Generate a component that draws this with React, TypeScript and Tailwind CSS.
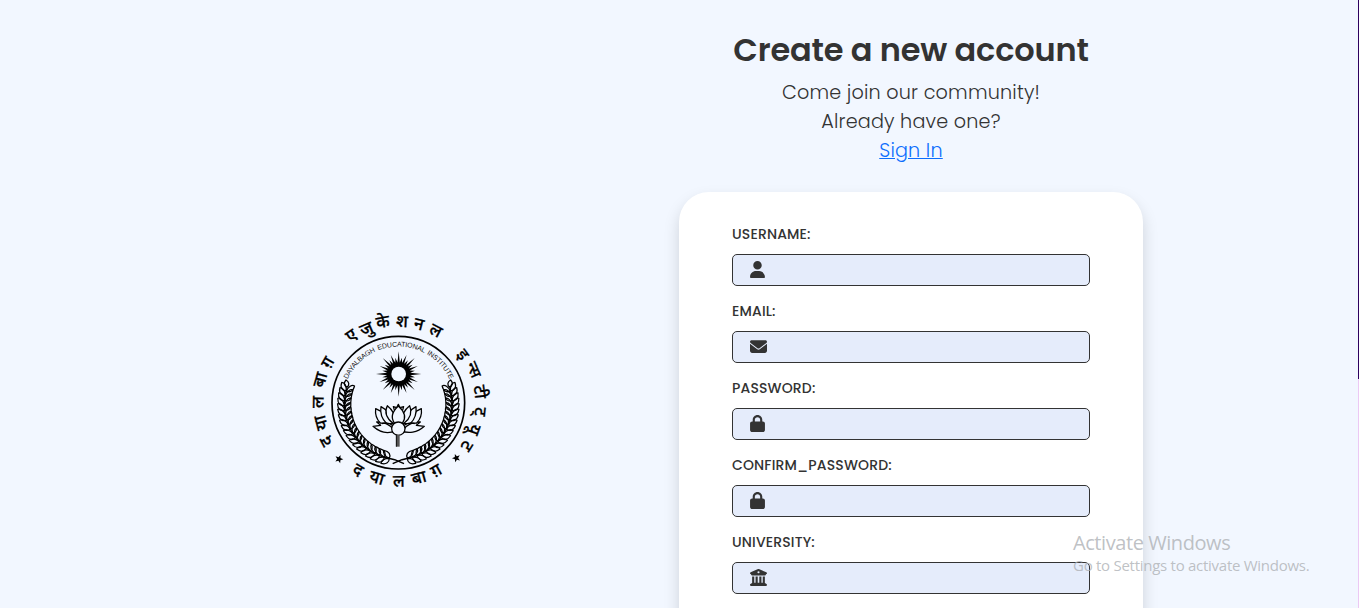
import type { ReactNode } from 'react';
import { FaUser, FaEnvelope, FaLock, FaBuildingColumns } from 'react-icons/fa6';

type Glyph = [string, number, number, number];

const CX = 295;
const CY = 308;

const outward: [string, number, number][] = [
  ['ए', 155, 108], ['जु', 200, 88], ['के', 249, 68], ['श', 306, 66], ['न', 356, 74], ['ल', 407, 93],
  ['इ', 487, 165], ['न्स', 519, 210], ['टी', 538, 276], ['ट्', 539, 335], ['यू', 521, 388], ['ट', 499, 437],
  ['द', 80, 423], ['या', 65, 368], ['ल', 56, 306], ['बा', 62, 240], ['ग़', 84, 188],
];
const inward: [string, number, number][] = [
  ['द', 173, 511], ['या', 230, 535], ['ल', 297, 545], ['बा', 357, 535], ['ग़', 409, 513],
];

const deg = (r: number) => (r * 180) / Math.PI;
const glyphs: Glyph[] = [
  ...outward.map(([t, x, y]): Glyph => [t, x, y, deg(Math.atan2(x - CX, CY - y))]),
  ...inward.map(([t, x, y]): Glyph => [t, x, y, deg(Math.atan2(CX - x, y - CY))]),
];

const sun = Array.from({ length: 64 }, (_, i) => {
  const a = (i / 64) * Math.PI * 2;
  const r = i % 2 ? 35 : i % 8 === 0 ? 68 : i % 4 === 0 ? 62 : 50;
  return `${(r * Math.sin(a)).toFixed(1)},${(-r * Math.cos(a)).toFixed(1)}`;
}).join(' ');

const star = Array.from({ length: 10 }, (_, i) => {
  const a = (i * Math.PI) / 5;
  const r = i % 2 ? 5.5 : 13;
  return `${(r * Math.sin(a)).toFixed(1)},${(-r * Math.cos(a)).toFixed(1)}`;
}).join(' ');

const leaves = Array.from({ length: 19 }, (_, i) => {
  const a = ((192 + i * 5.2) * Math.PI) / 180;
  const r = 169 - i * 0.5;
  return { x: CX + r * Math.sin(a), y: CY - r * Math.cos(a), rot: deg(a) };
});
const stem = leaves.map((l) => `L${l.x.toFixed(1)} ${l.y.toFixed(1)}`).join('');

function Branch() {
  return (
    <g fill="none" stroke="#000" strokeWidth="3.8" strokeLinejoin="round">
      <path d={`M312 491L284 479${stem}`} strokeWidth="4.5" />
      {leaves.map((l, i) => (
        <g key={i} transform={`translate(${l.x} ${l.y}) rotate(${l.rot})`}>
          <path d="M-8 0C-11 -11 -4 -21 13 -20C15 -11 6 -3 -8 0Z" />
          <path d="M-8 0C-11 11 -4 21 13 20C15 11 6 3 -8 0Z" />
        </g>
      ))}
      <path d="M141 262C131 256 131 248 138 240C147 245 150 254 141 262Z" />
    </g>
  );
}

function Emblem() {
  return (
    <svg width="200" height="200" viewBox="0 0 600 600" role="img" className="block">
      <circle cx="295" cy="308" r="199" fill="none" stroke="#000" strokeWidth="5" />
      <g fontFamily="'Noto Sans Devanagari','Noto Sans','Lohit Devanagari',sans-serif" fontWeight="500" textAnchor="middle" stroke="#000" strokeWidth="0.8">
        {glyphs.map(([t, x, y, r], i) => (
          <text key={i} fontSize={t === 'न्स' ? 46 : 51} transform={`translate(${x} ${y}) rotate(${r})`} y={t === 'न्स' ? 13 : 15}>{t}</text>
        ))}
      </g>
      <path id="motto" d="M143 238A168 168 0 0 1 450 241" fill="none" />
      <text fontFamily="'Liberation Sans',Arial,sans-serif" fontSize="21" fill="#111" wordSpacing="4">
        <textPath href="#motto" textLength="384" lengthAdjust="spacing">DAYALBAGH EDUCATIONAL INSTITUTE</textPath>
      </text>
      <g transform="translate(296 222)">
        <polygon points={sun} />
        <circle r="22" fill="#f2f7ff" />
      </g>
      <polygon points={star} transform="translate(117 477) rotate(20)" />
      <polygon points={star} transform="translate(469 474) rotate(-20)" />
      <Branch />
      <g transform="translate(590 0) scale(-1 1)"><Branch /></g>
      <g fill="#f2f7ff" stroke="#000" strokeWidth="3.8" strokeLinejoin="round">
        <path d="M288 392C265 402 240 398 219 379L242 376L230 366C251 365 272 374 280 389Z" />
        <path d="M302 392C325 402 352 398 373 379L349 376L361 366C340 365 319 374 311 389Z" />
        <path d="M241 369C231 359 225 342 227 326L243 334L265 370Z" />
        <path d="M350 369C360 359 366 342 364 326L348 334L326 370Z" />
        <path d="M260 371C244 355 240 337 243 320C261 329 272 342 280 371Z" />
        <path d="M331 371C347 355 350 337 348 320C330 329 319 342 311 371Z" />
        <path d="M279 370C257 352 254 333 262 317C278 329 286 343 290 370Z" />
        <path d="M312 370C334 352 336 333 329 317C313 329 305 343 301 370Z" />
        <path d="M283 330L280 320L290 323L295 313L300 323L311 320L308 330" />
        <path d="M295 318C278 334 270 352 284 370H307C320 352 313 334 295 318Z" />
        <path d="M246 371C256 367 268 368 277 376" fill="none" />
        <path d="M344 371C334 367 322 368 313 376" fill="none" />
        <circle cx="295" cy="386" r="20" />
      </g>
      <path d="M288 404H299V440H288Z" fill="#555" />
      <path d="M289 403V440" stroke="#111" strokeWidth="3" />
    </svg>
  );
}

function Field({ label, icon }: { label: string; icon: ReactNode }) {
  return (
    <div className="mb-[15px]">
      <label className="block h-5 text-sm leading-5 font-medium tracking-[0.15px] whitespace-nowrap">{label}</label>
      <div className="mt-[10px] flex h-8 items-center rounded-[5px] border border-[#333] bg-[#e5ecfb] pb-px pl-[17px] text-[17px]">
        {icon}
      </div>
    </div>
  );
}

export default function App() {
  return (
    <main className="relative flex h-[608px] w-full overflow-hidden bg-[#f2f7ff] font-['Poppins','Inter',sans-serif] text-[#333]">
      <aside className="w-[679px] shrink-0 pt-[300px] pl-[300px]">
        <Emblem />
      </aside>
      <section className="flex w-[464px] shrink-0 flex-col items-center">
        <h1 className="mt-[30px] h-10 text-[32px] leading-10 font-semibold tracking-[-0.18px] whitespace-nowrap">Create a new account</h1>
        <div className="mt-[8px] flex h-[87px] flex-col items-center text-[19.2px] leading-[29px] font-light tracking-[0.18px] whitespace-nowrap">
          <p>Come join our community!</p>
          <p>Already have one?</p>
          <a href="#" className="text-[#0d6efd] underline">Sign In</a>
        </div>
        <form className="mt-[27px] h-[500px] w-[464px] shrink-0 rounded-[30px] bg-white px-[53px] pt-8 shadow-[0_8px_16px_rgba(0,0,0,0.15)]">
          <Field label="USERNAME:" icon={<FaUser className="w-[15px]" />} />
          <Field label="EMAIL:" icon={<FaEnvelope />} />
          <Field label="PASSWORD:" icon={<FaLock className="w-[15px]" />} />
          <Field label="CONFIRM_PASSWORD:" icon={<FaLock className="w-[15px]" />} />
          <Field label="UNIVERSITY:" icon={<FaBuildingColumns />} />
        </form>
      </section>
      <div className="ml-auto flex w-px flex-col">
        <div className="h-[379px] bg-[#2d0060]" />
        <div className="flex-1 bg-[#ecc8f4]" />
      </div>
      <div className="pointer-events-none absolute top-[530px] left-[1073px] font-['Segoe_UI','Open_Sans',sans-serif] whitespace-nowrap text-[#aeb1b5]/80">
        <p className="text-[20px] leading-[26px] tracking-[-0.43px]">Activate Windows</p>
        <p className="-mt-px text-[15px] leading-5 tracking-[-0.27px]">Go to Settings to activate Windows.</p>
      </div>
    </main>
  );
}
